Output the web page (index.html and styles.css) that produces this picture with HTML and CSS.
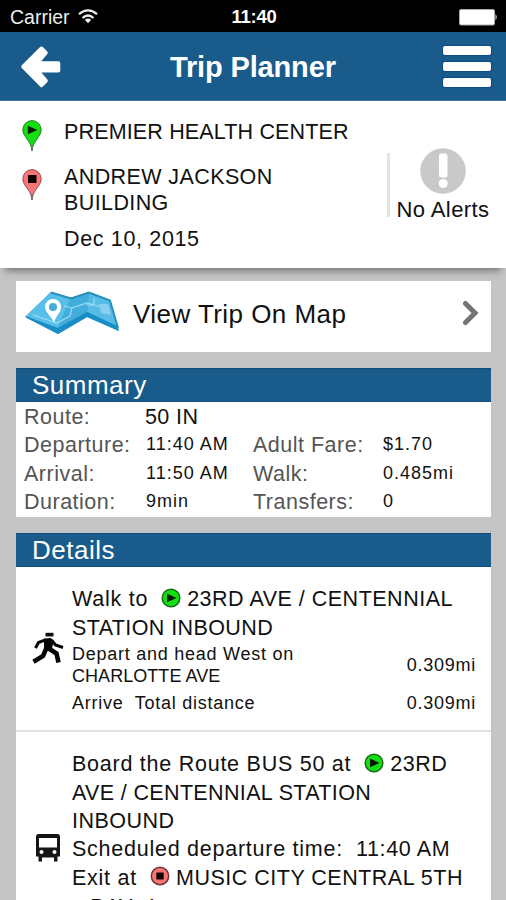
FILE: index.html
```html
<!DOCTYPE html>
<html lang="en">
<head>
<meta charset="utf-8">
<title>Trip Planner</title>
<link rel="stylesheet" href="styles.css">
</head>
<body>
<svg class="defs" width="0" height="0" aria-hidden="true">
  <symbol id="start-dot" viewBox="0 0 20 20"><circle cx="10" cy="10" r="8.8" fill="#12e012" stroke="#176b17" stroke-width="1.5"/><path d="M6 5.5L15.5 10L6 14.2Z" fill="#041804"/></symbol>
  <symbol id="stop-dot" viewBox="0 0 20 20"><circle cx="10" cy="10" r="8.7" fill="#fa7575" stroke="#713535" stroke-width="1.5"/><rect x="6.3" y="6.5" width="7.4" height="7" fill="#160303"/></symbol>
</svg>
<div class="status">
  <div class="carrier"><span>Carrier</span>
    <svg width="20" height="15" viewBox="0 0 20 15" fill="none" stroke="#eee" stroke-width="2.3"><path d="M1 5.2Q10-2.4 19 5.2"/><path d="M4.5 9Q10 4 15.500 9"/><path d="M6.800 10.800Q10 8.200 13.200 10.800L10 14.200Z" fill="#eee" stroke="none"/></svg>
  </div>
  <div class="clock">11:40</div>
  <svg class="battery" width="39" height="17" viewBox="0 0 39 17"><rect x=".5" y=".5" width="35" height="15.500" rx="1.500" fill="#fff" stroke="#aaa"/><path d="M36.500 5Q39 8 36.500 11.500Z" fill="#ddd"/></svg>
</div>
<header class="nav">
  <svg width="42" height="44" viewBox="0 0 42 44" fill="#fff" stroke="#fff" stroke-width="4" stroke-linejoin="round"><path d="M3.200 21.700L21.500 3.500L25.800 7.800L17 18.200H38.300V25.400H17L25.800 35.800L21.500 40.200Z"/></svg>
  <h1>Trip Planner</h1>
  <div class="menu"><i></i><i></i><i></i></div>
</header>
<section class="trip">
  <div class="places">
    <div class="place">
      <svg width="20" height="32" viewBox="0 0 20 32"><path d="M10 31L9.200 27C8 21 .8 16 .8 9.800A9.200 9.200 0 0 1 19.200 9.800C19.200 16 12 21 10.800 27Z" fill="#13df13" stroke="#2a7d2a"/><path d="M5.800 5.800L15.500 10L5.800 14.200Z" fill="#032003"/><path d="M10 25V31" stroke="#777" stroke-width="1.500"/></svg>
      <div class="t s3">PREMIER HEALTH CENTER</div>
    </div>
    <div class="place second">
      <svg width="20" height="32" viewBox="0 0 20 32"><path d="M10 31L9.200 27C8 21 .8 16 .8 9.800A9.200 9.200 0 0 1 19.200 9.800C19.200 16 12 21 10.800 27Z" fill="#fa7575" stroke="#8d5050"/><rect x="6" y="6" width="8.500" height="8" fill="#100"/><path d="M10 25V31" stroke="#777" stroke-width="1.500"/></svg>
      <div class="t s5"><div>ANDREW JACKSON</div><div>BUILDING</div><div class="date s7">Dec 10, 2015</div></div>
    </div>
  </div>
  <div class="alerts">
    <svg width="46" height="46" viewBox="0 0 46 46"><circle cx="23" cy="23" r="22.800" fill="#c9c9c9"/><rect x="19" y="5.500" width="8.500" height="24" rx="2.500" fill="#fff"/><circle cx="23.200" cy="35.500" r="4.500" fill="#fff"/></svg>
    <span>No Alerts</span>
  </div>
</section>
<main>
  <a class="map-link">
    <svg width="96" height="44" viewBox="0 0 96 44">
      <path d="M1 26L27 1L47 7L65 1L86 9L95 40L63 26L34 43Z" fill="#1e91c4"/>
      <path d="M2 25L27 1L47 7L34 37Z" fill="#58bfe8"/><path d="M47 7L65 1L63 21L34 37Z" fill="#42addb"/><path d="M65 1L86 9L93 35L63 21Z" fill="#57bce5"/>
      <path d="M27 1.500L47 7.500L65 1.500L86 9.500L94 37" stroke="#278fba" stroke-width="2" fill="none"/>
      <path d="M9 24L33 32L46 25L48 17L63 12L80 17M48 17L40 15M70 7V14H62" stroke="#9bdcf5" stroke-width="1.200" fill="none"/><path d="M75 13H84L87 24L77 22Z" fill="#8bcff0"/><path d="M1 26L34 37L63 21L93 35L95 40L63 26L34 43Z" fill="#198ec6"/>
      <path d="M30 32C28 25 21 22 21 16A8 8 0 0 1 37 16C37 22 32 24 30 32Z" fill="#fff"/><circle cx="29" cy="16" r="4" fill="#43add8"/>
    </svg>
    <span>View Trip On Map</span>
    <svg class="chev" width="18" height="26" viewBox="0 0 18 26"><path d="M3.500 3.500L13 13L3.500 22.500" fill="none" stroke="#747474" stroke-width="5" stroke-linecap="round"/></svg>
  </a>
  <section class="card">
    <h2>Summary</h2>
    <div class="grid">
      <span>Route:</span><b class="route">50 IN</b><span></span><b></b>
      <span>Departure:</span><b>11:40 AM</b><span>Adult Fare:</span><b>$1.70</b>
      <span>Arrival:</span><b>11:50 AM</b><span>Walk:</span><b>0.485mi</b>
      <span>Duration:</span><b>9min</b><span>Transfers:</span><b>0</b>
    </div>
  </section>
  <section class="card">
    <h2>Details</h2>
    <div class="step walk">
      <svg width="32" height="32" viewBox="0 0 32 32" fill="none" stroke="#050505"><path d="M13.500 .8H21.500V4.500H13.500Z" fill="#111" stroke="none"/><path d="M12 6.500L19 6L21.500 10L19.500 18.500L12 18Z" fill="#050505" stroke="none"/><path d="M13.500 7.800L6.500 10.500L3.500 16M19.500 8L23.500 13L31 15.500" stroke-width="3"/><path d="M14.500 16L11 24L1.500 29.800M16 16L24.500 21.500L26.500 30.500" stroke-width="4.600"/></svg>
      <div class="lines">
        <div class="l29"><span class="s10">Walk to</span><svg class="dot" width="20" height="20"><use href="#start-dot"/></svg><span class="s6">23RD AVE / CENTENNIAL</span></div>
        <div class="l29 s5">STATION INBOUND</div>
        <div class="sub"><div><div>Depart and head West on</div><div class="s2">CHARLOTTE AVE</div></div><div>0.309mi</div></div>
        <div class="sub total"><div>Arrive&nbsp; Total distance</div><div>0.309mi</div></div>
      </div>
    </div>
    <div class="step bus">
      <svg width="26" height="30" viewBox="0 0 26 30"><path d="M3.500 1H22.500Q25 1 25 4V23.500H22.500V28.500H19V24.500H7V28.500H3.500V23.500H1V4Q1 1 3.500 1Z" fill="#151515"/><path d="M4 5H22V14.500H4Z" fill="#fff"/><circle cx="6.500" cy="19" r="2" fill="#fff"/><circle cx="19.500" cy="19" r="2" fill="#fff"/></svg>
      <div class="lines">
        <div class="l29"><span class="s10">Board the Route BUS 50 at</span><svg class="dot" width="20" height="20"><use href="#start-dot"/></svg><span class="s6">23RD</span></div>
        <div class="l29 s4">AVE / CENTENNIAL STATION</div>
        <div class="l27 s6">INBOUND</div>
        <div class="l28"><span class="s10">Scheduled departure time:</span><span class="time s7">11:40 AM</span></div>
        <div class="l31"><span class="s10">Exit at</span><svg class="dot" width="20" height="20"><use href="#stop-dot"/></svg><span class="s8">MUSIC CITY CENTRAL 5TH</span></div>
        <div class="l28 bay">- BAY 4</div>
      </div>
    </div>
  </section>
</main>
</body>
</html>
```
FILE: styles.css
```css
* { box-sizing: border-box; }
html, body { height: 900px; overflow: hidden; }
body { margin: 0; background: #c5c5c5; color: #111; font-family: "Liberation Sans", Arial, sans-serif; font-size: 21.5px; }
svg { display: block; flex: none; }
.defs { position: absolute; }
h1, h2 { margin: 0; }
.status { height: 32px; background: #000; color: #eee; display: grid; grid-template-columns: 1fr auto 1fr; align-items: center; padding: 2px 8px 0 10px; font-size: 19.5px; line-height: 30px; }
.carrier { display: flex; align-items: center; gap: 8px; letter-spacing: 0; }
.carrier svg { margin-top: -2px; }
.clock { font-weight: bold; font-size: 18.5px; letter-spacing: -.3px; color: #fff; }
.battery { justify-self: end; }
.nav { height: 69px; background: #195b8b; border-bottom: 1px solid #437aa1; color: #fff; display: flex; align-items: center; justify-content: space-between; padding: 1px 15px 0 20px; }
.nav h1 { font-size: 29px; line-height: 40px; width: 168px; margin-left: 3px; letter-spacing: -.15px; white-space: nowrap; }
.menu { display: grid; gap: 7px; }
.menu i { width: 48px; height: 9px; background: #fff; border-radius: 2px; box-shadow: 0 0 1px 1px #104b83; }
.trip { height: 167px; background: #fff; display: flex; position: relative; box-shadow: 0 8px 7px -5px #777; padding: 18px 14px 0 22px; }
.places { flex: 1; }
.place { display: flex; gap: 22px; line-height: 26px; white-space: nowrap; }
.place svg { margin-top: 1px; }
.place.second { margin-top: 12px; }
.place.second svg { margin-top: 5px; }
.date { margin-top: 10px; }
.alerts { width: 105px; height: 64px; margin-top: 34px; border-left: 3px solid #e4e4e4; display: flex; flex-direction: column; align-items: center; white-space: nowrap; padding-left: 4px; letter-spacing: .4px; font-size: 22px; }
.alerts svg { margin-top: -5px; }
.alerts span { line-height: 28px; margin-top: 2px; }
main { padding: 13px 15px 0 16px; }
.map-link { height: 71px; background: #fff; display: flex; align-items: center; padding: 0 11px 5px 8px; font-size: 26px; letter-spacing: .45px; }
.map-link span { flex: 1; margin-left: 13px; line-height: 36px; }
.map-link svg { margin-top: -2px; }
.card { margin-top: 16px; background: #fff; }
.card h2 { height: 34px; background: #195b8b; border-top: 1px solid #104b7b; border-bottom: 1px solid #104b7b; color: #fff; font-size: 26px; font-weight: normal; letter-spacing: .5px; line-height: 33px; padding-left: 16px; }
.grid { display: grid; grid-template-columns: 122px 107px 130px 1fr; grid-auto-rows: 28.4px; height: 115px; padding-left: 8px; line-height: 29px; letter-spacing: .5px; white-space: nowrap; }
.grid span { color: #555; padding-top: 1px; }
.grid b { font-weight: normal; font-size: 18px; letter-spacing: 1px; }
.grid .route { font-size: 21.5px; letter-spacing: .4px; margin-left: -1px; padding-top: 1px; }
.step { display: flex; padding-left: 16px; }
.walk { height: 165px; padding-top: 18px; border-bottom: 2px solid #e2e2e2; }
.walk > svg { margin-top: 47px; margin-right: 8px; }
.bus { height: 180px; padding-top: 18px; }
.bus > svg { margin: 83px 11px 0 3px; }
.lines { flex: 1; white-space: nowrap; }
.l29, .l28, .l27, .l31 { display: flex; }
.l27 { height: 27px; line-height: 27px; }
.l28 { height: 28px; line-height: 28px; }
.l29 { height: 29px; line-height: 29px; }
.l31 { height: 31px; line-height: 31px; }
.dot { margin: 3px 6px 0 13px; }
.time { margin-left: 13px; }
.l28.bay { height: 26px; line-height: 26px; word-spacing: 4px; letter-spacing: .6px; }
.sub { display: flex; justify-content: space-between; align-items: center; font-size: 18px; line-height: 22px; letter-spacing: .75px; padding-right: 15px; }
.total { margin-top: 5px; }
.s2 { letter-spacing: .05px; }
.s3 { letter-spacing: .15px; }
.s4 { letter-spacing: .35px; }
.s5 { letter-spacing: .4px; }
.s6 { letter-spacing: .5px; }
.s7 { letter-spacing: .65px; }
.s8 { letter-spacing: .5px; }
.s10 { letter-spacing: .75px; }
```
